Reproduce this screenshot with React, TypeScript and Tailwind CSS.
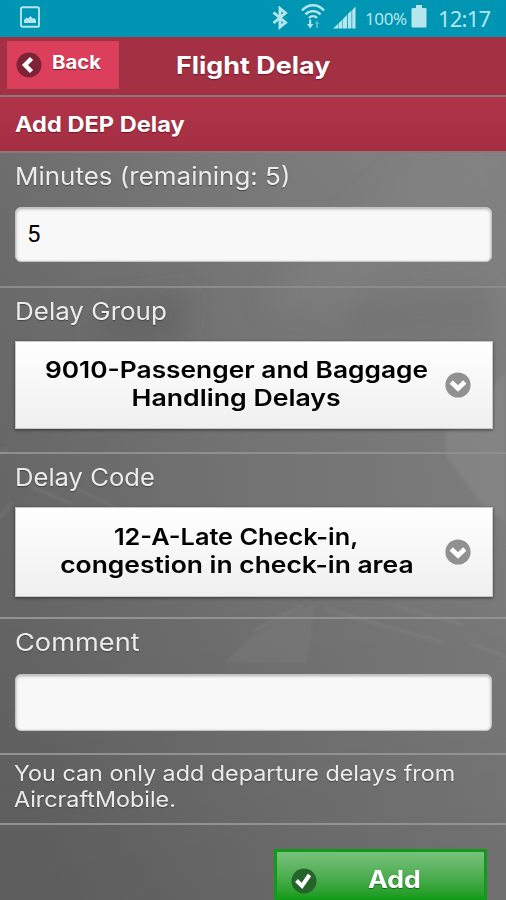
import type { ReactNode } from "react";

function StatusBar() {
  return (
    <div className="flex h-[37px] shrink-0 items-start bg-[#0095b3] pl-5 text-[#b5e6ee]">
      <svg width="20" height="22" viewBox="0 0 20 22" className="mt-[6px]" fill="none">
        <rect x="1" y="1.2" width="18" height="19.6" rx="1.6" stroke="currentColor" strokeWidth="1.9" />
        <path d="M4 17v-3l2.500-2.500 1.500 1 2.500-2.500 2 2.500 1.500-.5 2 2v3z" fill="currentColor" />
      </svg>
      <svg width="16" height="24" viewBox="0 0 16 24" className="ml-[232px] mt-[6px]" fill="none">
        <path d="M1.500 6.500L13.500 16.500l-5.500 4.500V2.500L13.500 7 1.500 17" stroke="currentColor" strokeWidth="2.900" />
      </svg>
      <svg width="24" height="26" viewBox="0 0 24 26" className="ml-[13px] mt-[3px]" fill="none">
        <path d="M1 7.500C7 .5 17 .5 23 7.500M4.500 11.500c4-4.500 11-4.500 15 0M8 15c2-2.500 6-2.500 8 0" stroke="currentColor" strokeWidth="2.400" />
        <path d="M8.200 16.500v4.500H6l3.200 4.500 3.200-4.500h-2.200v-4.500z" fill="currentColor" />
        <path d="M15 25v-4h-1.500l2.500-3.500 2.500 3.500H17v4z" fill="currentColor" opacity=".45" />
      </svg>
      <svg width="23" height="23" viewBox="0 0 23 23" className="ml-[8px] mt-[6px]" fill="currentColor">
        <path d="M0 22.500L5 18v4.500zM5.500 17.500l4-4v9h-4zM10 13l4-4v13.500h-4zM14.800 8l3.700-3.500v18h-3.700zM19.200 4L22.500.5v22h-3.300z" />
      </svg>
      <span className="ml-[9px] mt-[7px] w-[46px] whitespace-nowrap font-['Noto_Sans',sans-serif] text-[17px] leading-[23px] tracking-[-0.4px]">
        100%
      </span>
      <svg width="16" height="23" viewBox="0 0 16 23" className="mt-[5px]" fill="currentColor">
        <path d="M5 0h6v3h3.500q1 0 1 1v17.500q0 1-1 1h-13q-1 0-1-1V4q0-1 1-1H5z" />
      </svg>
      <span className="ml-[11px] mt-[4px] whitespace-nowrap font-['Noto_Sans',sans-serif] text-[22px] leading-[29px] tracking-[-0.8px]">
        12:17
      </span>
    </div>
  );
}

// Faded apron photo behind the form
function Backdrop() {
  return (
    <svg
      className="absolute inset-0 h-full w-full"
      viewBox="0 0 506 747"
      preserveAspectRatio="none"
      aria-hidden="true"
    >
      <defs>
        <linearGradient id="base" x1="0" y1="0.5" x2="1" y2="0.3">
          <stop offset="0" stopColor="#676767" />
          <stop offset="0.5" stopColor="#747474" />
          <stop offset="1" stopColor="#7e7e7e" />
        </linearGradient>
        <linearGradient id="shade" x1="0" y1="0" x2="0" y2="1">
          <stop offset="0" stopColor="#fff" stopOpacity="0.03" />
          <stop offset="0.5" stopColor="#000" stopOpacity="0.01" />
          <stop offset="1" stopColor="#000" stopOpacity="0.1" />
        </linearGradient>
        <filter id="soft" x="-20%" y="-20%" width="140%" height="140%">
          <feGaussianBlur stdDeviation="12" />
        </filter>
        <filter id="edge">
          <feGaussianBlur stdDeviation="1.5" />
        </filter>
      </defs>
      <rect width="506" height="747" fill="url(#base)" />
      <rect width="506" height="747" fill="url(#shade)" />
      <g filter="url(#soft)">
        <path d="M420 0h86v30L330 160l-70-10z" fill="#888" opacity="0.35" />
        <path d="M110 150l80-10-10 50H90z" fill="#5e5e5e" opacity="0.5" />
        <path d="M350 150l140-20v60H340z" fill="#6e6e6e" opacity="0.4" />
      </g>
      <g filter="url(#edge)">
        <path d="M445 280l61-60v150l-22-16-38-50z" fill="#8c8c8c" opacity="0.5" />
        <path d="M30 333l42 18M75 335l45 22M0 365l12-16M0 300l8-6" stroke="#7c7c7c" strokeWidth="2.500" opacity="0.6" />
        <path d="M225 510c20-25 60-50 90-58l-8 58z" fill="#7d7d7d" opacity="0.35" />
        <path d="M325 456l120 34M393 452l70 20M470 490l36 14M253 478l50-26" stroke="#858585" strokeWidth="3" opacity="0.45" />
      </g>
    </svg>
  );
}

function ChevronDown() {
  return (
    <svg width="26" height="26" viewBox="0 0 26 26" fill="none" className="shrink-0">
      <circle cx="13" cy="13" r="12.600" fill="#919191" />
      <path d="M6.200 10L13 16.500 19.800 10" stroke="#fff" strokeWidth="4.600" />
    </svg>
  );
}

function Row({ label, className, children }: { label: ReactNode; className: string; children: ReactNode }) {
  return (
    <div className={`shrink-0 border-b-2 px-[15px] text-[#ececec] ${className}`}>
      <div className="h-[54px] whitespace-nowrap pt-[7px] text-[24.500px] leading-[32px] [text-shadow:0_1px_1px_#444]">
        {label}
      </div>
      {children}
    </div>
  );
}

function TextField({ value, className }: { value: string; className: string }) {
  return (
    <div
      className={`-mr-px flex items-center rounded-md border border-[#c4c4c4] bg-[#f8f8f8] px-[11px] pb-px font-['Roboto',sans-serif] text-[24px] text-black shadow-[inset_0_1px_3px_#aaa] ${className}`}
    >
      {value}
    </div>
  );
}

function SelectField({ lines, className }: { lines: ReactNode; className: string }) {
  return (
    <div
      className={`-mr-[2px] -mt-px flex items-center border border-[#c8c8c8] bg-linear-to-b from-white to-[#efefef] pl-[29px] pr-[21px] text-black shadow-[0_1px_3px_rgba(0,0,0,0.5)] ${className}`}
    >
      <div className="flex flex-1 flex-col items-center whitespace-nowrap pb-[2px] pr-[17px] text-[23px] font-semibold leading-[28px]">
        {lines}
      </div>
      <ChevronDown />
    </div>
  );
}

export default function App() {
  return (
    <div className="flex h-[900px] w-[506px] flex-col overflow-hidden bg-[#707070] font-['Inter',sans-serif]">
      <StatusBar />

      <header className="flex h-[60px] shrink-0 items-start border-b-2 border-[#8b7779] bg-[#a43043] text-white">
        <button className="ml-[7px] mt-[4px] flex h-[48px] w-[112px] items-center border border-[#cc4258] bg-[#dc3f5c] pl-[8px] font-bold">
          <svg width="26" height="26" viewBox="0 0 26 26" fill="none">
            <circle cx="13" cy="13" r="12.500" fill="#7e2336" />
            <path d="M15.500 6.500L9 13l6.500 6.500" stroke="#fff" strokeWidth="4.400" />
          </svg>
          <span className="ml-[10px] inline-block origin-left scale-x-[1.07] pb-[4px] text-[19px] leading-[24px] [text-shadow:0_1px_1px_#7a1c30]">
            Back
          </span>
        </button>
        <h1 className="ml-[57px] mt-[13px] origin-left scale-x-[1.12] whitespace-nowrap text-[24px] font-bold leading-[32px] [text-shadow:0_1px_1px_#6a1826]">
          Flight Delay
        </h1>
      </header>

      <div className="flex h-[56px] shrink-0 items-center border-b-2 border-[#8b7779] bg-linear-to-b from-[#b13449] to-[#a42f43] pl-[15px] text-[22px] font-bold text-white [text-shadow:0_1px_1px_#6a1826]">
        <span className="origin-left scale-x-[1.073] whitespace-nowrap">Add DEP Delay</span>
      </div>

      <main className="relative flex-1 overflow-hidden">
        <Backdrop />
        <div className="relative flex flex-col">
          <Row
            label={<span className="inline-block origin-left scale-x-[1.06]">Minutes (remaining: 5)</span>}
            className="h-[135px] border-[#8b8b8b]"
          >
            <TextField value="5" className="h-[55px]" />
          </Row>

          <Row
            label={<span className="inline-block origin-left scale-x-[1.06]">Delay Group</span>}
            className="h-[166px] border-[#8f8f8f]"
          >
            <SelectField
              className="h-[88px]"
              lines={
                <>
                  <span className="scale-x-[1.144]">9010-Passenger and Baggage</span>
                  <span className="scale-x-[1.160]">Handling Delays</span>
                </>
              }
            />
          </Row>

          <Row
            label={<span className="inline-block origin-left scale-x-[1.045]">Delay Code</span>}
            className="h-[165px] border-[#929292]"
          >
            <SelectField
              className="h-[90px]"
              lines={
                <>
                  <span className="scale-x-[1.100]">12-A-Late Check-in,</span>
                  <span className="scale-x-[1.148]">congestion in check-in area</span>
                </>
              }
            />
          </Row>

          <Row
            label={<span className="inline-block origin-left scale-x-[1.110]">Comment</span>}
            className="h-[136px] border-[#929292]"
          >
            <TextField value="" className="mt-px h-[57px]" />
          </Row>

          <div className="flex h-[70px] shrink-0 flex-col items-start whitespace-nowrap border-b-2 border-[#929292] pl-[14px] pt-[6px] text-[21.500px] leading-[25.500px] text-[#ececec] [text-shadow:0_1px_1px_#444]">
            <span className="origin-left scale-x-[1.085]">You can only add departure delays from</span>
            <span className="origin-left scale-x-[1.085]">AircraftMobile.</span>
          </div>

          <button className="ml-[274px] mt-[24px] flex h-[62px] w-[213px] items-center border-[3px] border-[#129a1a] bg-linear-to-b from-[#78c17d] to-[#0c9a16] to-85% pl-[14px] font-bold text-white">
            <svg width="26" height="26" viewBox="0 0 26 26" fill="none" className="mt-[2px]">
              <circle cx="13" cy="13" r="12.500" fill="#24632a" />
              <path d="M5.500 12.500l5.500 5.500 7.500-11" stroke="#fff" strokeWidth="4" />
            </svg>
            <span className="ml-[51px] origin-left scale-x-[1.110] text-[24px] leading-[32px] [text-shadow:0_1px_1px_#0a6a12]">
              Add
            </span>
          </button>
        </div>
      </main>
    </div>
  );
}
